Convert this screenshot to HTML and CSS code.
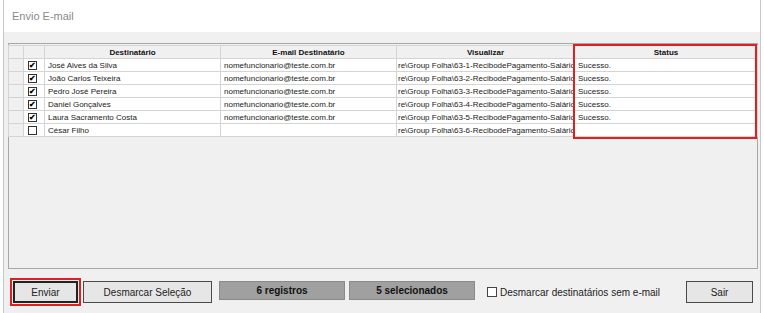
FILE: index.html
```html
<!DOCTYPE html>
<html lang="pt">
<head>
  <meta charset="UTF-8" />
  <title>Envio E-mail</title>
  <link rel="stylesheet" href="styles.css">
</head>
<body>
  <div class="janela">
    <div class="titulo">Envio E-mail</div>

    <div class="conteudo">
      <div class="grade">
        <table>
          <thead>
            <tr>
              <th class="ind"></th>
              <th class="chk"></th>
              <th class="c-dest">Destinatário</th>
              <th class="c-mail">E-mail Destinatário</th>
              <th class="c-vis">Visualizar</th>
              <th class="c-status">Status</th>
            </tr>
          </thead>
          <tbody>
            <tr><td class="ind"></td><td class="chk"><span class="caixa marcada">✔</span></td><td>José Alves da Silva</td><td>nomefuncionario@teste.com.br</td><td class="vis">re\Group Folha\63-1-RecibodePagamento-Salário</td><td>Sucesso.</td></tr>
            <tr><td class="ind"></td><td class="chk"><span class="caixa marcada">✔</span></td><td>João Carlos Teixeira</td><td>nomefuncionario@teste.com.br</td><td class="vis">re\Group Folha\63-2-RecibodePagamento-Salário</td><td>Sucesso.</td></tr>
            <tr><td class="ind"></td><td class="chk"><span class="caixa marcada">✔</span></td><td>Pedro José Pereira</td><td>nomefuncionario@teste.com.br</td><td class="vis">re\Group Folha\63-3-RecibodePagamento-Salário</td><td>Sucesso.</td></tr>
            <tr><td class="ind"></td><td class="chk"><span class="caixa marcada">✔</span></td><td>Daniel Gonçalves</td><td>nomefuncionario@teste.com.br</td><td class="vis">re\Group Folha\63-4-RecibodePagamento-Salário</td><td>Sucesso.</td></tr>
            <tr><td class="ind"></td><td class="chk"><span class="caixa marcada">✔</span></td><td>Laura Sacramento Costa</td><td>nomefuncionario@teste.com.br</td><td class="vis">re\Group Folha\63-5-RecibodePagamento-Salário</td><td>Sucesso.</td></tr>
            <tr><td class="ind"></td><td class="chk"><span class="caixa"></span></td><td>César Filho</td><td></td><td class="vis">re\Group Folha\63-6-RecibodePagamento-Salário</td><td></td></tr>
          </tbody>
        </table>
        <div class="destaque-status"></div>
      </div>

      <div class="rodape">
        <div class="destaque-botao"><button class="botao b-enviar">Enviar</button></div>
        <button class="botao b-desmarcar">Desmarcar Seleção</button>
        <div class="contador primeiro">6 registros</div>
        <div class="contador">5 selecionados</div>
        <label class="opcao"><span class="caixa"></span>Desmarcar destinatários sem e-mail</label>
        <button class="botao b-sair">Sair</button>
      </div>
    </div>
  </div>
</body>
</html>
```

FILE: styles.css
```css
body {
  margin: 0;
  font-family: Tahoma, "DejaVu Sans", "Liberation Sans", sans-serif;
  background: #ffffff;
}

.janela {
  width: 756px;
  height: 313px;
  margin-left: 3px;
  border-left: 1px solid #c8c8c8;
  border-right: 1px solid #c8c8c8;
  background: #f0f0f0;
  display: flex;
  flex-direction: column;
}

.titulo {
  height: 32px;
  background: #fff;
  color: #8a8a8a;
  font-family: "Liberation Sans", sans-serif;
  font-size: 11px;
  line-height: 32px;
  padding-left: 8px;
  flex-shrink: 0;
}

.conteudo {
  padding: 11px 0 0 4px;
}

.grade {
  position: relative;
  width: 748px;
  height: 224px;
  border: 1px solid #a8a8a8;
  background: #f0f0f0;
}

table {
  border-collapse: collapse;
  table-layout: fixed;
  width: 750px;
  margin-top: 1px;
  margin-left: -1px;
  font-family: "Liberation Sans", sans-serif;
  font-size: 8px;
  color: #222;
}

th, td {
  border: 1px solid #d4d4d4;
  height: 12px;
  padding: 0 3px;
  white-space: nowrap;
  overflow: hidden;
  text-align: left;
}

th {
  background: #f0f0f0;
  font-weight: bold;
  text-align: center;
  height: 12px;
  color: #111;
}

td {
  background: #fff;
}

td.ind {
  background: #f0f0f0;
}

th.ind, td.ind { width: 8px; }
th.chk, td.chk { width: 16px; padding: 0 0 0 4px; }
.c-dest { width: 169px; }
.c-mail { width: 169px; }
.c-vis { width: 171px; }
td.vis { padding-left: 1px; }

.caixa {
  display: inline-block;
  width: 7px;
  height: 7px;
  border: 1px solid #333;
  background: #fff;
  font-size: 8px;
  line-height: 7px;
  text-align: center;
  vertical-align: middle;
  color: #000;
}

.caixa.marcada {
  font-weight: bold;
}

.destaque-status {
  position: absolute;
  left: 564px;
  top: 0px;
  width: 180px;
  height: 91px;
  border: 2px solid #e02020;
}

.rodape {
  display: flex;
  align-items: center;
  margin-top: 9px;
  padding-left: 2px;
  gap: 4px;
  font-family: "Liberation Sans", sans-serif;
  font-size: 10px;
}

.destaque-botao {
  border: 2px solid #e02020;
  padding: 1px;
  display: flex;
}

.botao {
  height: 22px;
  background: #e6e6e6;
  border: 1px solid #4a4a4a;
  font-family: "Liberation Sans", sans-serif;
  font-size: 10px;
  color: #222;
  padding: 0;
}

.b-enviar { width: 65px; border-width: 2px; border-color: #222; }
.b-desmarcar { width: 129px; margin-left: -2px; }

.contador {
  width: 124px;
  height: 17px;
  line-height: 17px;
  margin-top: -4px;
  background: #a0a0a0;
  border: 1px solid #8a8a8a;
  font-weight: bold;
  text-align: center;
  color: #111;
}

.contador.primeiro { margin-left: 3px; }

.opcao {
  display: flex;
  align-items: center;
  gap: 3px;
  margin-left: 8px;
  color: #222;
}

.opcao .caixa {
  width: 8px;
  height: 8px;
  border-color: #444;
}

.b-sair {
  width: 67px;
  margin-left: 22px;
}
```
